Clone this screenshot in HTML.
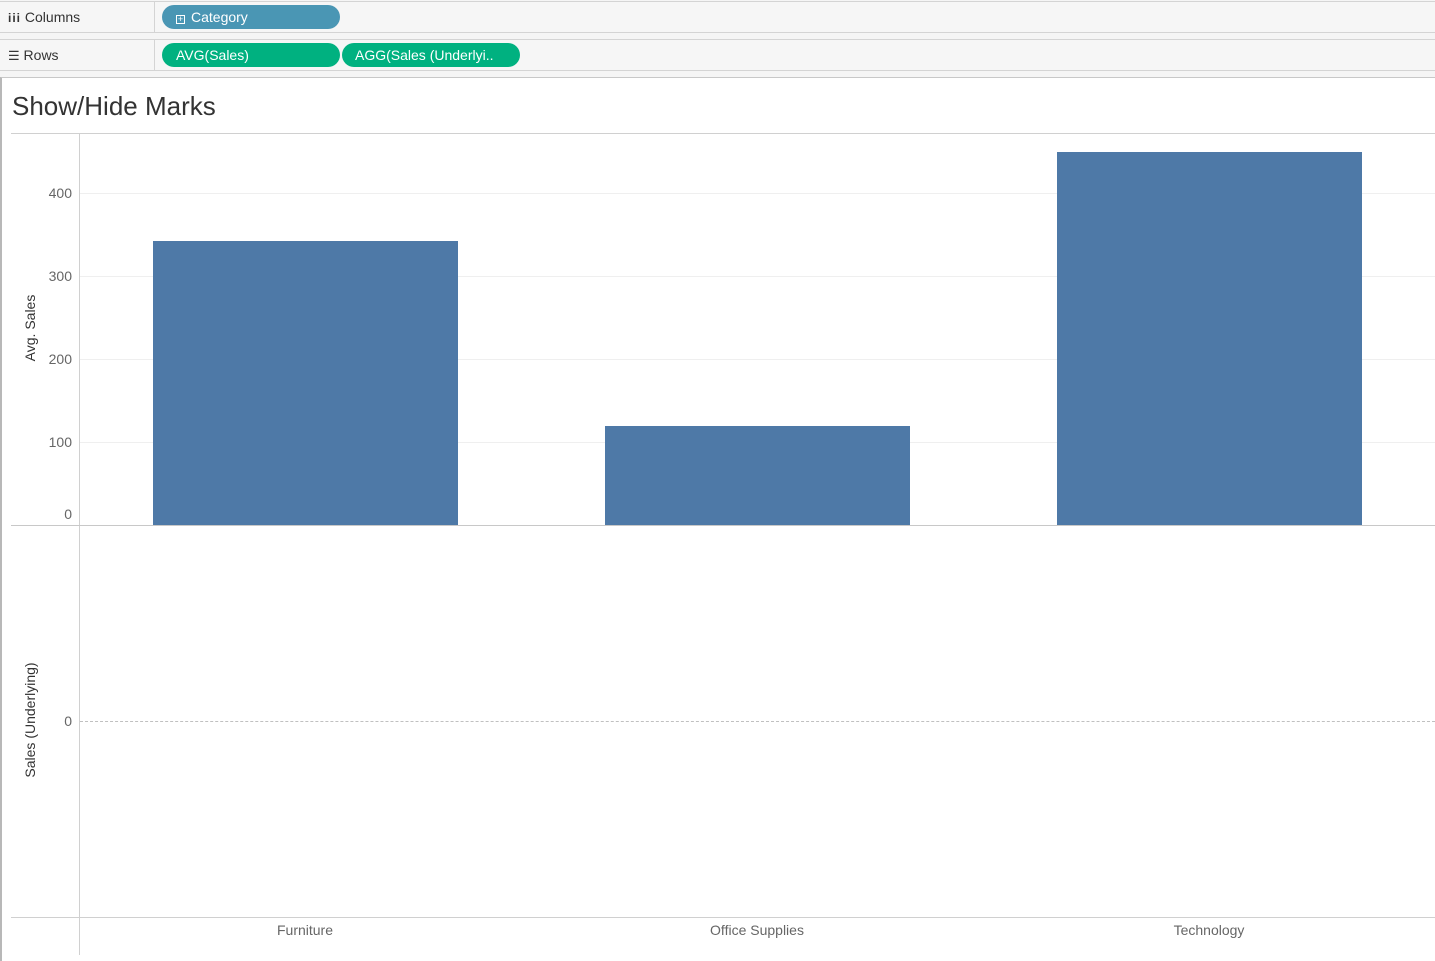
<!DOCTYPE html>
<html><head><meta charset="utf-8"><style>
*{margin:0;padding:0;box-sizing:border-box}
body{width:1435px;height:961px;background:#f5f5f5;position:relative;overflow:hidden;font-family:"Liberation Sans",sans-serif;color:#333}
.a{position:absolute}
.shelf{position:absolute;left:0;width:1435px;height:32px;background:#f6f6f6;border-top:1px solid #d4d4d4;border-bottom:1px solid #d4d4d4}
.lbl{position:absolute;left:0;top:0;width:155px;height:100%;border-right:1px solid #d4d4d4;font-size:14px;line-height:30px;padding-left:8px;color:#333}
.pill{position:absolute;height:24px;border-radius:12px;color:#fff;font-size:14px;line-height:24px}
.t{font-size:14px;color:#666;position:absolute}
.g{position:absolute;left:80px;width:1355px;height:1px;background:#efefef}
.bar{position:absolute;background:#4e79a7;width:305px}
</style></head><body>
<div class="shelf" style="top:1px"><div class="lbl"><span style="font-weight:bold;font-size:12px;letter-spacing:1px">iii</span>&nbsp;Columns</div></div>
<div class="pill" style="left:162px;top:5px;width:178px;background:#4a96b4;padding-left:14px"><span style="display:inline-block;width:9px;height:9px;border:1px solid #fff;font-size:9px;line-height:6px;text-align:center;vertical-align:0px;margin-right:6px">+</span>Category</div>
<div class="shelf" style="top:39px"><div class="lbl"><span style="font-size:13px">☰</span>&nbsp;Rows</div></div>
<div class="pill" style="left:162px;top:43px;width:178px;background:#00b180;padding-left:14px">AVG(Sales)</div>
<div class="pill" style="left:342px;top:43px;width:178px;background:#00b180;padding-left:13px">AGG(Sales (Underlyi..</div>

<div class="a" style="left:0;top:77px;width:1435px;height:884px;background:#fff;border-top:1px solid #c8c8c8;border-left:2px solid #b8b8b8"></div>
<div class="a" style="left:12px;top:91px;font-size:26px;color:#333;font-weight:300">Show/Hide Marks</div>
<div class="a" style="left:11px;top:133px;width:1424px;height:1px;background:#d0d0d0"></div>
<div class="a" style="left:79px;top:133px;width:1px;height:822px;background:#d0d0d0"></div>
<div class="g" style="top:193px"></div><div class="g" style="top:276px"></div><div class="g" style="top:359px"></div><div class="g" style="top:442px"></div>
<div class="bar" style="left:153px;top:241px;height:284px"></div>
<div class="bar" style="left:605px;top:426px;height:99px"></div>
<div class="bar" style="left:1057px;top:152px;height:373px"></div>
<div class="a" style="left:11px;top:525px;width:1424px;height:1px;background:#c8c8c8"></div>
<div class="a" style="left:80px;top:721px;width:1355px;border-top:1px dashed #c0c0c0"></div>
<div class="a" style="left:11px;top:917px;width:1424px;height:1px;background:#d0d0d0"></div>
<div class="t" style="right:1363px;top:185px">400</div>
<div class="t" style="right:1363px;top:268px">300</div>
<div class="t" style="right:1363px;top:351px">200</div>
<div class="t" style="right:1363px;top:434px">100</div>
<div class="t" style="right:1363px;top:506px">0</div>
<div class="t" style="right:1363px;top:713px">0</div>
<div class="a" style="left:30px;top:328px;transform:translate(-50%,-50%) rotate(-90deg);font-size:14px;color:#333;white-space:nowrap">Avg. Sales</div>
<div class="a" style="left:30px;top:720px;transform:translate(-50%,-50%) rotate(-90deg);font-size:14px;color:#333;white-space:nowrap">Sales (Underlying)</div>
<div class="t" style="left:305px;top:922px;transform:translateX(-50%)">Furniture</div>
<div class="t" style="left:757px;top:922px;transform:translateX(-50%)">Office Supplies</div>
<div class="t" style="left:1209px;top:922px;transform:translateX(-50%)">Technology</div>
</body></html>
